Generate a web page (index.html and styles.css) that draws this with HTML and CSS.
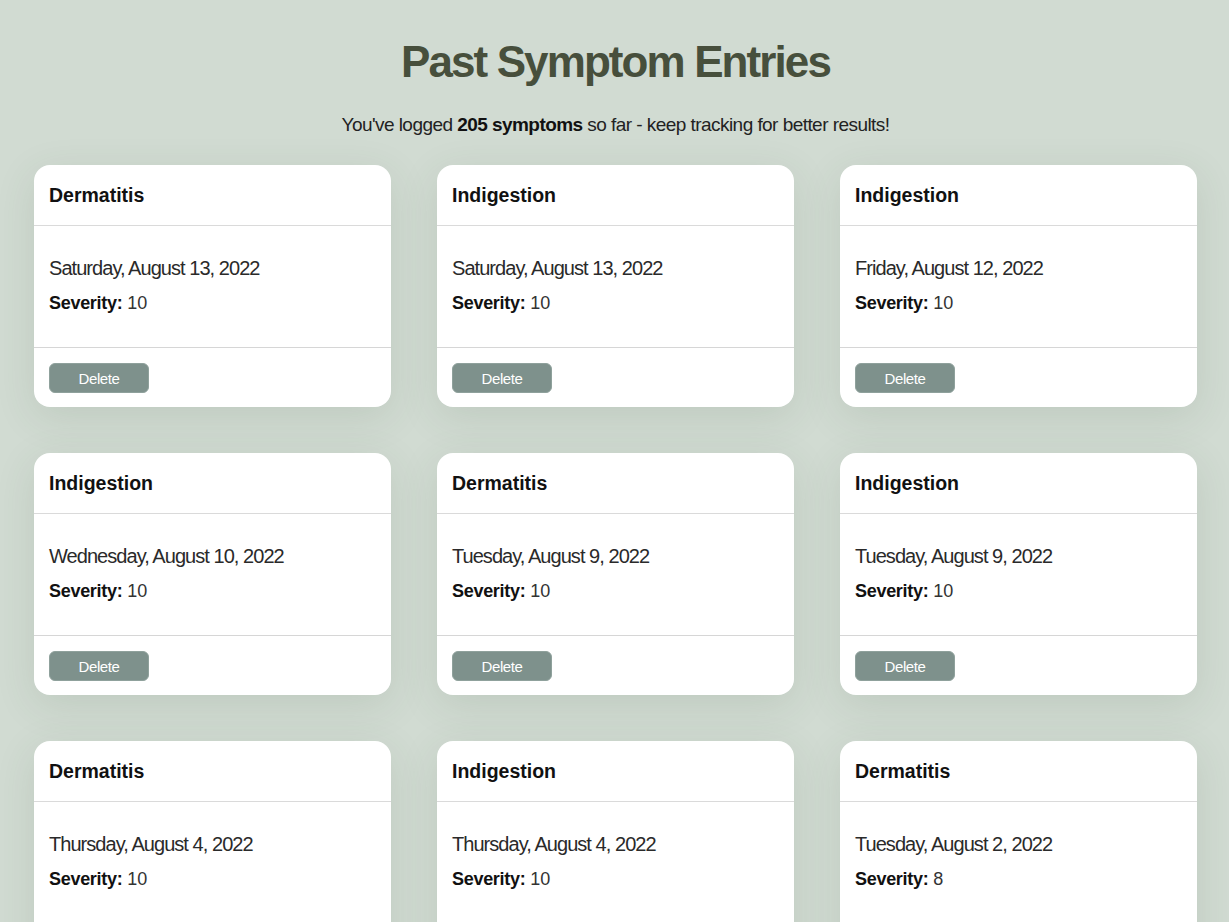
FILE: index.html
```html
<!DOCTYPE html>
<html lang="en">
<head>
<meta charset="utf-8">
<title>Past Symptom Entries</title>
<link rel="stylesheet" href="styles.css">
</head>
<body>
<main class="page">
  <h1 class="title">Past Symptom Entries</h1>
  <p class="subtitle">You've logged <strong>205 symptoms</strong> so far - keep tracking for better results!</p>
  <section class="grid">
    <article class="card">
      <header class="card-head">Dermatitis</header>
      <div class="card-body"><p class="date">Saturday, August 13, 2022</p><p class="sev"><strong>Severity:</strong> 10</p></div>
      <footer class="card-foot"><button class="btn">Delete</button></footer>
    </article>
    <article class="card">
      <header class="card-head">Indigestion</header>
      <div class="card-body"><p class="date">Saturday, August 13, 2022</p><p class="sev"><strong>Severity:</strong> 10</p></div>
      <footer class="card-foot"><button class="btn">Delete</button></footer>
    </article>
    <article class="card">
      <header class="card-head">Indigestion</header>
      <div class="card-body"><p class="date">Friday, August 12, 2022</p><p class="sev"><strong>Severity:</strong> 10</p></div>
      <footer class="card-foot"><button class="btn">Delete</button></footer>
    </article>
    <article class="card">
      <header class="card-head">Indigestion</header>
      <div class="card-body"><p class="date">Wednesday, August 10, 2022</p><p class="sev"><strong>Severity:</strong> 10</p></div>
      <footer class="card-foot"><button class="btn">Delete</button></footer>
    </article>
    <article class="card">
      <header class="card-head">Dermatitis</header>
      <div class="card-body"><p class="date">Tuesday, August 9, 2022</p><p class="sev"><strong>Severity:</strong> 10</p></div>
      <footer class="card-foot"><button class="btn">Delete</button></footer>
    </article>
    <article class="card">
      <header class="card-head">Indigestion</header>
      <div class="card-body"><p class="date">Tuesday, August 9, 2022</p><p class="sev"><strong>Severity:</strong> 10</p></div>
      <footer class="card-foot"><button class="btn">Delete</button></footer>
    </article>
    <article class="card">
      <header class="card-head">Dermatitis</header>
      <div class="card-body"><p class="date">Thursday, August 4, 2022</p><p class="sev"><strong>Severity:</strong> 10</p></div>
      <footer class="card-foot"><button class="btn">Delete</button></footer>
    </article>
    <article class="card">
      <header class="card-head">Indigestion</header>
      <div class="card-body"><p class="date">Thursday, August 4, 2022</p><p class="sev"><strong>Severity:</strong> 10</p></div>
      <footer class="card-foot"><button class="btn">Delete</button></footer>
    </article>
    <article class="card">
      <header class="card-head">Dermatitis</header>
      <div class="card-body"><p class="date">Tuesday, August 2, 2022</p><p class="sev"><strong>Severity:</strong> 8</p></div>
      <footer class="card-foot"><button class="btn">Delete</button></footer>
    </article>
  </section>
</main>
</body>
</html>
```
FILE: styles.css
```css
* { box-sizing: border-box; }
html, body { margin: 0; padding: 0; }
body {
  background: #d1dbd2;
  font-family: "Liberation Sans", Arial, sans-serif;
  color: #222;
}
.page {
  width: 1163px;
  margin-left: 34px;
  padding-top: 36px;
}
.title {
  margin: 0;
  text-align: center;
  font-size: 44px;
  line-height: 52px;
  font-weight: 700;
  letter-spacing: -1.9px;
  color: #474f3c;
}
.subtitle {
  margin: 24px 0 0;
  text-align: center;
  font-size: 19px;
  line-height: 26px;
  letter-spacing: -0.55px;
  color: #222;
}
.subtitle strong { color: #111; }
.grid {
  margin-top: 27px;
  display: grid;
  grid-template-columns: repeat(3, 357px);
  column-gap: 46px;
  row-gap: 46px;
}
.card {
  background: #fff;
  border-radius: 16px;
  box-shadow: 0 10px 40px rgba(60, 80, 60, 0.12);
  overflow: hidden;
}
.card-head {
  height: 61px;
  padding: 0 15px;
  display: flex;
  align-items: center;
  font-size: 19.5px;
  font-weight: 700;
  color: #111;
  border-bottom: 1px solid #dadada;
}
.card-body {
  height: 122px;
  padding: 30px 15px 0;
  border-bottom: 1px solid #d6d6d6;
}
.card-body p { margin: 0; }
.date {
  font-size: 20px;
  line-height: 24px;
  letter-spacing: -0.95px;
  color: #2a2a2a;
}
.sev {
  margin-top: 11px !important;
  font-size: 18px;
  line-height: 24px;
  color: #333;
}
.sev strong { color: #111; letter-spacing: -0.3px; }
.card-foot {
  height: 59px;
  padding: 15px;
}
.btn {
  width: 100px;
  height: 30px;
  border: 1px solid #8fa19c;
  border-radius: 6px;
  background: #7e918c;
  color: #fff;
  font-family: "Liberation Sans", Arial, sans-serif;
  font-size: 15px;
  letter-spacing: -0.4px;
  padding: 0;
}
```
